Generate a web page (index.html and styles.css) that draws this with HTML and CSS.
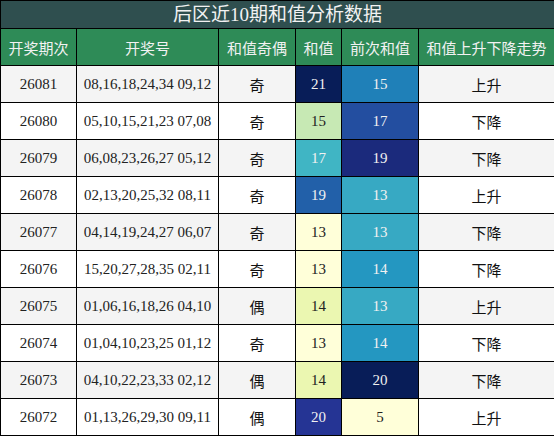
FILE: index.html
```html
<!DOCTYPE html>
<html lang="zh">
<head>
    <meta charset="UTF-8">
    <meta name="viewport" content="width=device-width, initial-scale=1.0">
    <title>后区近10期和值分析数据</title>
    <link rel="stylesheet" href="styles.css">
</head>

<body>
    <table class="stats">
        <colgroup>
            <col class="c-issue">
            <col class="c-nums">
            <col class="c-parity">
            <col class="c-sum">
            <col class="c-prev">
            <col class="c-trend">
        </colgroup>
        <thead>
            <tr class="title-row">
                <th colspan="6">后区近10期和值分析数据</th>
            </tr>
            <tr class="head-row">
                <th>开奖期次</th>
                <th>开奖号</th>
                <th>和值奇偶</th>
                <th>和值</th>
                <th>前次和值</th>
                <th>和值上升下降走势</th>
            </tr>
        </thead>
        <tbody>
            <tr class="odd">
                <td>26081</td><td>08,16,18,24,34 09,12</td><td class="cn">奇</td>
                <td class="light" style="background:#081d58">21</td>
                <td class="light" style="background:#1f80b8">15</td>
                <td class="cn">上升</td>
            </tr>
            <tr>
                <td>26080</td><td>05,10,15,21,23 07,08</td><td class="cn">奇</td>
                <td style="background:#c7e9b4">15</td>
                <td class="light" style="background:#234ea0">17</td>
                <td class="cn">下降</td>
            </tr>
            <tr class="odd">
                <td>26079</td><td>06,08,23,26,27 05,12</td><td class="cn">奇</td>
                <td class="light" style="background:#40b5c4">17</td>
                <td class="light" style="background:#1b2a7c">19</td>
                <td class="cn">下降</td>
            </tr>
            <tr>
                <td>26078</td><td>02,13,20,25,32 08,11</td><td class="cn">奇</td>
                <td class="light" style="background:#2260a9">19</td>
                <td class="light" style="background:#37a9c3">13</td>
                <td class="cn">上升</td>
            </tr>
            <tr class="odd">
                <td>26077</td><td>04,14,19,24,27 06,07</td><td class="cn">奇</td>
                <td style="background:#ffffd9">13</td>
                <td class="light" style="background:#37a9c3">13</td>
                <td class="cn">下降</td>
            </tr>
            <tr>
                <td>26076</td><td>15,20,27,28,35 02,11</td><td class="cn">奇</td>
                <td style="background:#ffffd9">13</td>
                <td class="light" style="background:#2497c1">14</td>
                <td class="cn">下降</td>
            </tr>
            <tr class="odd">
                <td>26075</td><td>01,06,16,18,26 04,10</td><td class="cn">偶</td>
                <td style="background:#ebf7b1">14</td>
                <td class="light" style="background:#37a9c3">13</td>
                <td class="cn">上升</td>
            </tr>
            <tr>
                <td>26074</td><td>01,04,10,23,25 01,12</td><td class="cn">奇</td>
                <td style="background:#ffffd9">13</td>
                <td class="light" style="background:#2497c1">14</td>
                <td class="cn">下降</td>
            </tr>
            <tr class="odd">
                <td>26073</td><td>04,10,22,23,33 02,12</td><td class="cn">偶</td>
                <td style="background:#ebf7b1">14</td>
                <td class="light" style="background:#081d58">20</td>
                <td class="cn">下降</td>
            </tr>
            <tr>
                <td>26072</td><td>01,13,26,29,30 09,11</td><td class="cn">偶</td>
                <td class="light" style="background:#253494">20</td>
                <td style="background:#ffffd9">5</td>
                <td class="cn">上升</td>
            </tr>
        </tbody>
    </table>
</body>

</html>
```

FILE: styles.css
```css
body {
    margin: 0;
    padding: 0;
    background-color: #fff;
    font-family: "Liberation Serif", "Noto Sans CJK SC", serif;
}

.stats {
    width: 554px;
    border-collapse: collapse;
    table-layout: fixed;
    border: 1px solid #000;
}

.c-issue { width: 76px; }
.c-nums { width: 142px; }
.c-parity { width: 77px; }
.c-sum { width: 46px; }
.c-prev { width: 77px; }
.c-trend { width: 136px; }

.stats th,
.stats td {
    border: 1px solid #000;
    padding: 0;
    text-align: center;
    vertical-align: middle;
    white-space: nowrap;
}

.title-row th {
    height: 27px;
    background-color: #2f4f4f;
    color: #f2f2f2;
    font-size: 19px;
    font-weight: normal;
    line-height: 27px;
}

.head-row th {
    height: 36px;
    background-color: #2e8b57;
    color: #f2f2f2;
    font-family: "Noto Sans CJK SC", sans-serif;
    font-size: 15px;
    font-weight: normal;
}

.stats td {
    height: 36px;
    font-size: 15px;
    color: #222;
}

.stats tr.odd td {
    background-color: #f4f4f4;
}

.stats tr td.cn {
    font-family: "Noto Sans CJK SC", sans-serif;
    color: #111;
}

.stats td.light {
    color: #f1f1f1;
}
```
